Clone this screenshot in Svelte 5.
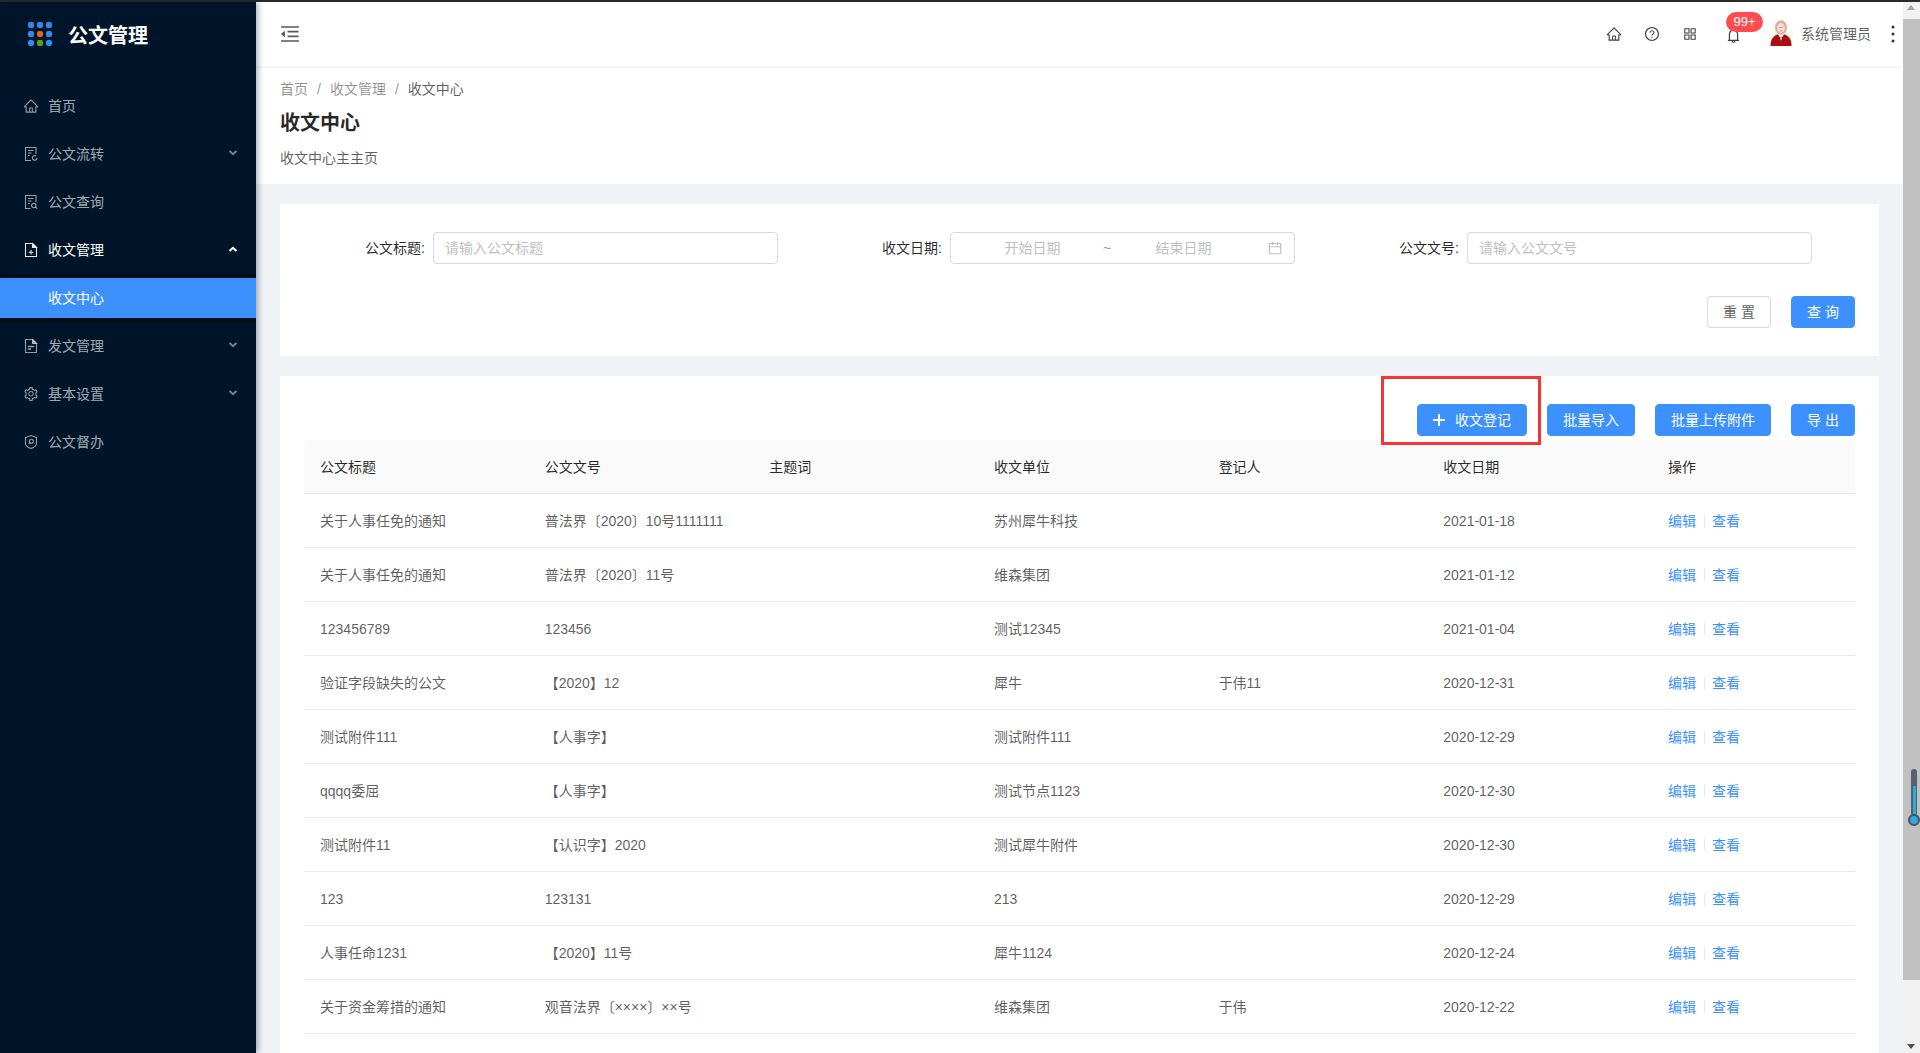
<script>
  const fontPaths = {
    home: "M946.5 505L560.1 118.8l-25.9-25.9a31.5 31.5 0 0 0-44.4 0L77.5 505a63.9 63.9 0 0 0-18.8 46c.4 35.2 29.7 63.3 64.9 63.3h42.5V940h691.8V614.3h43.4c17.1 0 33.2-6.7 45.3-18.8a63.6 63.6 0 0 0 18.7-45.3c0-17-6.7-33.1-18.8-45.2zM568 868H456V664h112v204zm217.9-325.7V868H632V640c0-22.1-17.9-40-40-40H432c-22.1 0-40 17.9-40 40v228H238.1V542.3h-96l370-369.7 23.1 23.1L882 542.3h-96.1z",
    help: "M512 64C264.6 64 64 264.6 64 512s200.6 448 448 448 448-200.6 448-448S759.4 64 512 64zm0 820c-205.4 0-372-166.6-372-372s166.6-372 372-372 372 166.6 372 372-166.6 372-372 372zM623.6 316.7C593.6 290.4 554 276 512 276s-81.6 14.5-111.6 40.7C369.2 344 352 380.7 352 420v7.6c0 4.4 3.6 8 8 8h48c4.4 0 8-3.6 8-8V420c0-44.1 43.1-80 96-80s96 35.9 96 80c0 31.1-22 59.6-56.1 72.7-21.2 8.1-39.2 22.3-52.1 40.9-13.1 19-19.9 41.8-19.9 64.9V620c0 4.4 3.6 8 8 8h48c4.4 0 8-3.6 8-8v-22.7a48.3 48.3 0 0 1 30.9-44.8c59-22.7 97.1-74.7 97.1-132.5.1-39.3-17.1-76-48.3-103.3zM472 732a40 40 0 1 0 80 0 40 40 0 1 0-80 0z",
    apps: "M464 144H160c-8.8 0-16 7.2-16 16v304c0 8.8 7.2 16 16 16h304c8.8 0 16-7.2 16-16V160c0-8.8-7.2-16-16-16zm-52 268H212V212h200v200zm452-268H560c-8.8 0-16 7.2-16 16v304c0 8.8 7.2 16 16 16h304c8.8 0 16-7.2 16-16V160c0-8.8-7.2-16-16-16zm-52 268H612V212h200v200zM464 544H160c-8.8 0-16 7.2-16 16v304c0 8.8 7.2 16 16 16h304c8.8 0 16-7.2 16-16V560c0-8.8-7.2-16-16-16zm-52 268H212V612h200v200zm452-268H560c-8.8 0-16 7.2-16 16v304c0 8.8 7.2 16 16 16h304c8.8 0 16-7.2 16-16V560c0-8.8-7.2-16-16-16zm-52 268H612V612h200v200z",
    bell: "M816 768h-24V428c0-141.1-104.3-257.7-240-277.1V112c0-22.1-17.9-40-40-40s-40 17.9-40 40v38.9c-135.7 19.4-240 136-240 277.1v340h-24c-17.7 0-32 14.3-32 32v32c0 4.4 3.6 8 8 8h216c0 61.8 50.2 112 112 112s112-50.2 112-112h216c4.4 0 8-3.6 8-8v-32c0-17.7-14.3-32-32-32zM512 888c-26.5 0-48-21.5-48-48h96c0 26.5-21.5 48-48 48zM304 768V428c0-55.6 21.6-107.8 60.9-147.1S456.4 220 512 220c55.6 0 107.8 21.6 147.1 60.9S720 372.4 720 428v340H304z",
    setting: "M924.8 625.7l-65.5-56c3.1-19 4.7-38.4 4.7-57.8s-1.6-38.8-4.7-57.8l65.5-56a32.03 32.03 0 0 0 9.3-35.2l-.9-2.6a443.74 443.74 0 0 0-79.7-137.9l-1.8-2.1a32.12 32.12 0 0 0-35.1-9.5l-81.3 28.9c-30-24.6-63.5-44-99.7-57.6l-15.7-85a32.05 32.05 0 0 0-25.8-25.7l-2.7-.5c-52.1-9.4-106.9-9.4-159 0l-2.7.5a32.05 32.05 0 0 0-25.8 25.7l-15.8 85.4a351.86 351.86 0 0 0-99 57.4l-81.9-29.1a32 32 0 0 0-35.1 9.5l-1.8 2.1a446.02 446.02 0 0 0-79.7 137.9l-.9 2.6c-4.5 12.5-.8 26.5 9.3 35.2l66.3 56.6c-3.1 18.8-4.6 38-4.6 57.1 0 19.2 1.5 38.4 4.6 57.1L99 625.5a32.03 32.03 0 0 0-9.3 35.2l.9 2.6c18.1 50.4 44.9 96.9 79.7 137.9l1.8 2.1a32.12 32.12 0 0 0 35.1 9.5l81.9-29.1c29.8 24.5 63.1 43.9 99 57.4l15.8 85.4a32.05 32.05 0 0 0 25.8 25.7l2.7.5a449.4 449.4 0 0 0 159 0l2.7-.5a32.05 32.05 0 0 0 25.8-25.7l15.7-85a350 350 0 0 0 99.7-57.6l81.3 28.9a32 32 0 0 0 35.1-9.5l1.8-2.1c34.8-41.1 61.6-87.5 79.7-137.9l.9-2.6c4.5-12.3.8-26.3-9.3-35zM788.3 465.9c2.5 15.1 3.8 30.6 3.8 46.1s-1.3 31-3.8 46.1l-6.6 40.1 74.7 63.9a370.03 370.03 0 0 1-42.6 73.6L721 702.8l-31.4 25.8c-23.9 19.6-50.5 35-79.3 45.8l-38.1 14.3-17.9 97a377.5 377.5 0 0 1-85 0l-17.9-97.2-37.8-14.5c-28.5-10.8-55-26.2-78.7-45.7l-31.4-25.9-93.4 33.2c-17-22.9-31.2-47.6-42.6-73.6l75.5-64.5-6.5-40c-2.4-14.9-3.7-30.3-3.7-45.5 0-15.3 1.2-30.6 3.7-45.5l6.5-40-75.5-64.5c11.3-26.1 25.6-50.7 42.6-73.6l93.4 33.2 31.4-25.9c23.7-19.5 50.2-34.9 78.7-45.7l37.9-14.3 17.9-97.2c28.1-3.2 56.8-3.2 85 0l17.9 97 38.1 14.3c28.7 10.8 55.4 26.2 79.3 45.8l31.4 25.8 92.8-32.9c17 22.9 31.2 47.6 42.6 73.6L781.8 426l6.5 39.9zM512 326c-97.2 0-176 78.8-176 176s78.8 176 176 176 176-78.8 176-176-78.8-176-176-176zm79.2 255.2A111.6 111.6 0 0 1 512 614c-29.9 0-58-11.7-79.2-32.8A111.6 111.6 0 0 1 400 502c0-29.9 11.7-58 32.8-79.2C454 401.6 482.1 390 512 390c29.9 0 58 11.6 79.2 32.8A111.6 111.6 0 0 1 624 502c0 29.9-11.7 58-32.8 79.2z",
    calendar: "M880 184H712v-64c0-4.4-3.6-8-8-8h-56c-4.4 0-8 3.6-8 8v64H384v-64c0-4.4-3.6-8-8-8h-56c-4.4 0-8 3.6-8 8v64H144c-17.7 0-32 14.3-32 32v664c0 17.7 14.3 32 32 32h736c17.7 0 32-14.3 32-32V216c0-17.7-14.3-32-32-32zm-40 656H184V460h656v380zM184 392V256h128v48c0 4.4 3.6 8 8 8h56c4.4 0 8-3.6 8-8v-48h256v48c0 4.4 3.6 8 8 8h56c4.4 0 8-3.6 8-8v-48h128v136H184z",
    outdent: "M408 442h480c4.4 0 8-3.6 8-8v-56c0-4.4-3.6-8-8-8H408c-4.4 0-8 3.6-8 8v56c0 4.4 3.6 8 8 8zm-8 204c0 4.4 3.6 8 8 8h480c4.4 0 8-3.6 8-8v-56c0-4.4-3.6-8-8-8H408c-4.4 0-8 3.6-8 8v56zm504-486H120c-4.4 0-8 3.6-8 8v56c0 4.4 3.6 8 8 8h784c4.4 0 8-3.6 8-8v-56c0-4.4-3.6-8-8-8zm0 632H120c-4.4 0-8 3.6-8 8v56c0 4.4 3.6 8 8 8h784c4.4 0 8-3.6 8-8v-56c0-4.4-3.6-8-8-8zM115.4 518.9L271.7 642c5.8 4.6 14.4.5 14.4-6.9V388.9c0-7.4-8.5-11.5-14.4-6.9L115.4 505.1a8.74 8.74 0 0 0 0 13.8z"
  };

  const menu = [
    { label: "首页", icon: "home" },
    { label: "公文流转", icon: "docRefresh", arrow: "down" },
    { label: "公文查询", icon: "docSearch" },
    { label: "收文管理", icon: "docPlus", arrow: "up", open: true },
    { label: "发文管理", icon: "docLines", arrow: "down" },
    { label: "基本设置", icon: "setting", arrow: "down" },
    { label: "公文督办", icon: "shield" }
  ];

  const columns = ["公文标题", "公文文号", "主题词", "收文单位", "登记人", "收文日期", "操作"];

  const rows = [
    ["关于人事任免的通知", "普法界〔2020〕10号1111111", "", "苏州犀牛科技", "", "2021-01-18"],
    ["关于人事任免的通知", "普法界〔2020〕11号", "", "维森集团", "", "2021-01-12"],
    ["123456789", "123456", "", "测试12345", "", "2021-01-04"],
    ["验证字段缺失的公文", "【2020】12", "", "犀牛", "于伟11", "2020-12-31"],
    ["测试附件111", "【人事字】", "", "测试附件111", "", "2020-12-29"],
    ["qqqq委屈", "【人事字】", "", "测试节点1123", "", "2020-12-30"],
    ["测试附件11", "【认识字】2020", "", "测试犀牛附件", "", "2020-12-30"],
    ["123", "123131", "", "213", "", "2020-12-29"],
    ["人事任命1231", "【2020】11号", "", "犀牛1124", "", "2020-12-24"],
    ["关于资金筹措的通知", "观音法界〔××××〕××号", "", "维森集团", "于伟", "2020-12-22"]
  ];

  const dots = ["#2d8cf0", "#2d8cf0", "#2d8cf0", "#2d8cf0", "#e8650c", "#2d8cf0", "#2d8cf0", "#4ea528", "#2d8cf0"];
</script>

{#snippet glyph(name, size)}
  <svg class="glyph" width={size} height={size} viewBox="64 64 896 896" fill="currentColor"><path d={fontPaths[name]} /></svg>
{/snippet}

{#snippet menuIcon(name)}
  {#if name === "home" || name === "setting"}
    {@render glyph(name, 14)}
  {:else}
    <svg class="glyph" width="14" height="14" viewBox="0 0 14 14" fill="none" stroke="currentColor" stroke-width="1.1">
      {#if name === "docRefresh"}
        <path d="M7 13.500H1.500V.5h10.500v6.500" />
        <path d="M4 3.500h5.500M4 6h3.500M4 8.500h1.500" />
        <path d="M13 11a2.300 2.300 0 1 1-1-2" />
      {:else if name === "docSearch"}
        <path d="M6.500 13.500h-5V.5h10.500v6.500" />
        <path d="M4 3.500h5.500M4 6h3.500M4 8.500h1.500" />
        <circle cx="9.800" cy="10.400" r="2.200" />
        <path d="M11.400 12l1.800 1.600" />
      {:else if name === "docPlus"}
        <path d="M8.500.5h-7v13h11V4.500z" />
        <path d="M8.500.5v4h4z" fill="currentColor" />
        <path d="M7 7v4.500M4.700 9.200h4.600" />
      {:else if name === "docLines"}
        <path d="M8.500.5h-7v13h11V4.500z" />
        <path d="M8.500.5v4h4z" fill="currentColor" />
        <path d="M3.800 7.500h6.500M3.800 10h3.200" stroke-width="1.500" />
      {:else if name === "shield"}
        <path d="M7 .6l5.500 2v5.600c0 2.400-2.500 4.200-5.500 5.200-3-1-5.500-2.800-5.500-5.200V2.600z" />
        <circle cx="7.400" cy="6.200" r="2" />
        <path d="M6 7.600L4.800 9.200" />
      {/if}
    </svg>
  {/if}
{/snippet}

<div class="window">
  <div class="topline"></div>
  <div class="page">
    <aside class="sider">
      <div class="logo">
        <div class="dots">
          {#each dots as color}
            <i style:background={color}></i>
          {/each}
        </div>
        <span class="logo-text">公文管理</span>
      </div>
      <nav>
        {#each menu as item}
          <div class="item" class:open={item.open}>
            <span class="ico">{@render menuIcon(item.icon)}</span>
            <span>{item.label}</span>
            {#if item.arrow}
              <svg class="arrow" width="10" height="6" viewBox="0 0 10 6" fill="none" stroke="currentColor" stroke-width="2">
                <path d={item.arrow === "up" ? "M1.500 5L5 1.800 8.500 5" : "M1.500 1L5 4.200 8.500 1"} />
              </svg>
            {/if}
          </div>
          {#if item.open}
            <div class="sub">
              <div class="sub-item">收文中心</div>
            </div>
          {/if}
        {/each}
      </nav>
    </aside>

    <main>
      <header class="topbar">
        <span class="collapse">{@render glyph("outdent", 20)}</span>
        <div class="actions">
          <span class="action">{@render glyph("home", 14)}</span>
          <span class="action">{@render glyph("help", 14)}</span>
          <span class="action">{@render glyph("apps", 14)}</span>
          <span class="action bell">
            {@render glyph("bell", 15)}
            <b class="badge">99+</b>
          </span>
          <svg class="avatar" width="24" height="26" viewBox="0 0 24 26">
            <circle cx="12" cy="13" r="12" fill="#fdf9f0" />
            <path d="M1.500 26c0-7 2.500-9.500 6.500-11.500h8c4 2 6.500 4.500 6.500 11.500z" fill="#a90f0f" />
            <path d="M9 14l3 6.500L15 14z" fill="#f7efe6" />
            <path d="M9.500 16.500l2.500 1.200 2.500-1.200v2.200l-2.500-1-2.500 1z" fill="#7d0b0b" />
            <ellipse cx="12" cy="7.500" rx="6" ry="7.200" fill="#dcaea2" />
            <ellipse cx="12" cy="8" rx="3.800" ry="5" fill="#f3dfd6" />
            <path d="M10 7.500h4M10.500 11h3" stroke="#c48d80" stroke-width="0.800" />
          </svg>
          <span class="username">系统管理员</span>
          <svg class="more" width="14" height="18" viewBox="0 0 14 18" fill="#333">
            <circle cx="7" cy="2" r="1.500" />
            <circle cx="7" cy="9" r="1.500" />
            <circle cx="7" cy="16" r="1.500" />
          </svg>
        </div>
      </header>

      <section class="page-head">
        <div class="crumbs">
          <span>首页</span><em>/</em><span>收文管理</span><em>/</em><span class="current">收文中心</span>
        </div>
        <h1>收文中心</h1>
        <p>收文中心主主页</p>
      </section>

      <section class="card search">
        <div class="fields">
          <div class="field">
            <label for="title">公文标题:</label>
            <input id="title" placeholder="请输入公文标题" />
          </div>
          <div class="field">
            <label for="date">收文日期:</label>
            <div class="range" id="date">
              <span>开始日期</span>
              <span class="tilde">~</span>
              <span>结束日期</span>
              <span class="cal">{@render glyph("calendar", 14)}</span>
            </div>
          </div>
          <div class="field">
            <label for="code">公文文号:</label>
            <input id="code" placeholder="请输入公文文号" />
          </div>
        </div>
        <div class="btns">
          <button class="plain">重 置</button>
          <button>查 询</button>
        </div>
      </section>

      <section class="card list">
        <div class="btns top">
          <div class="marked">
            <button class="add"><svg width="12" height="12" viewBox="0 0 12 12" fill="#fff"><path d="M5 0h2v5h5v2H7v5H5V7H0V5h5z" /></svg>收文登记</button>
            <span class="redbox"></span>
          </div>
          <button>批量导入</button>
          <button>批量上传附件</button>
          <button>导 出</button>
        </div>
        <table>
          <thead>
            <tr>
              {#each columns as col}
                <th>{col}</th>
              {/each}
            </tr>
          </thead>
          <tbody>
            {#each rows as row}
              <tr>
                {#each row as cell}
                  <td>{cell}</td>
                {/each}
                <td class="ops"><a href="#edit">编辑</a><i></i><a href="#view">查看</a></td>
              </tr>
            {/each}
          </tbody>
        </table>
      </section>
    </main>

    <div class="scrollbar">
      <span class="tri up"></span>
      <div class="thumb"></div>
      <span class="tri down"></span>
    </div>
    <div class="thermo"><span class="level"></span><span class="bulb"></span></div>
  </div>
</div>

<style>
  :global(body) {
    margin: 0;
    overflow: hidden;
    font-family: "Liberation Sans", "Noto Sans CJK SC", sans-serif;
    font-size: 14px;
    line-height: 22px;
    color: rgba(0, 0, 0, 0.65);
  }

  .window {
    height: 1053px;
    display: flex;
    flex-direction: column;
    overflow: hidden;
  }

  .topline {
    height: 2px;
    flex: none;
    background: #2b2b2b;
  }

  .page {
    flex: 1;
    min-height: 0;
    display: flex;
    position: relative;
  }

  .glyph {
    display: block;
  }

  /* sidebar */
  .sider {
    width: 256px;
    flex: none;
    background: #001529;
    box-shadow: 2px 0 6px rgba(0, 21, 41, 0.35);
    z-index: 2;
    color: rgba(255, 255, 255, 0.65);
  }

  .logo {
    height: 64px;
    padding-left: 28px;
    box-sizing: border-box;
    display: flex;
    align-items: center;
    gap: 16px;
    color: #fff;
    font-size: 20px;
    font-weight: 700;
  }

  .logo-text {
    padding-top: 4px;
  }

  .dots {
    width: 24px;
    display: grid;
    grid-template-columns: repeat(3, 6px);
    gap: 3px;
  }

  .dots i {
    height: 6px;
    border-radius: 2px;
  }

  nav {
    padding-top: 20px;
    display: flex;
    flex-direction: column;
    gap: 8px;
  }

  .item {
    height: 40px;
    padding: 0 24px;
    display: flex;
    align-items: center;
    gap: 10px;
    position: relative;
  }

  .item.open {
    color: #fff;
  }

  .ico {
    width: 14px;
    opacity: 0.9;
  }

  .arrow {
    position: absolute;
    right: 18px;
    top: 16px;
    opacity: 0.7;
  }

  .item.open .arrow {
    opacity: 1;
  }

  .sub {
    background: #000c17;
    padding: 4px 0;
    margin: -4px 0;
  }

  .sub-item {
    height: 40px;
    line-height: 40px;
    padding-left: 48px;
    background: #3d91ff;
    color: #fff;
  }

  /* main column */
  main {
    flex: 1;
    min-width: 0;
    background: #f0f2f5;
    overflow: hidden;
  }

  .topbar {
    height: 64px;
    background: #fff;
    box-shadow: 0 1px 4px rgba(0, 21, 41, 0.08);
    display: flex;
    align-items: center;
    justify-content: space-between;
    padding: 0 3px 0 24px;
    position: relative;
  }

  .collapse {
    color: rgba(0, 0, 0, 0.65);
  }

  .actions {
    display: flex;
    align-items: center;
    color: rgba(0, 0, 0, 0.75);
  }

  .action {
    width: 38px;
    display: flex;
    justify-content: center;
    position: relative;
  }

  .action.bell {
    width: 48px;
    padding-top: 2px;
  }

  .badge {
    position: absolute;
    left: 17px;
    top: -14px;
    width: 37px;
    height: 20px;
    line-height: 20px;
    border-radius: 10px;
    background: #ff4d4f;
    color: #fff;
    font-size: 13px;
    font-weight: 400;
    text-align: center;
  }

  .avatar {
    margin-left: 12px;
    margin-top: -2px;
  }

  .username {
    margin-left: 8px;
    color: rgba(0, 0, 0, 0.65);
  }

  .more {
    margin-left: 15px;
  }

  .page-head {
    background: #fff;
    height: 118px;
    box-sizing: border-box;
    padding: 12px 24px 0;
  }

  .crumbs {
    color: rgba(0, 0, 0, 0.45);
  }

  .crumbs em {
    font-style: normal;
    margin: 0 9px;
  }

  .crumbs .current {
    color: rgba(0, 0, 0, 0.65);
  }

  h1 {
    margin: 12px 0 0;
    font-size: 20px;
    line-height: 22px;
    font-weight: 700;
    color: rgba(0, 0, 0, 0.85);
  }

  .page-head p {
    margin: 13px 0 0;
  }

  .card {
    background: #fff;
    margin: 20px 24px 0;
    padding: 28px 24px;
  }

  .fields {
    display: grid;
    grid-template-columns: repeat(3, 1fr);
  }

  .field {
    display: flex;
    align-items: center;
    padding-right: 43px;
  }

  .field label {
    width: 129px;
    flex: none;
    padding-right: 8px;
    box-sizing: border-box;
    text-align: right;
    color: rgba(0, 0, 0, 0.85);
    white-space: nowrap;
  }

  input,
  .range {
    flex: 1;
    min-width: 0;
    height: 32px;
    box-sizing: border-box;
    border: 1px solid #d9d9d9;
    border-radius: 4px;
    padding: 0 11px;
    font: inherit;
    outline: none;
    background: #fff;
  }

  input::placeholder {
    color: #bfbfbf;
  }

  .range {
    display: grid;
    grid-template-columns: 141px 6px 149px 10px 14px;
    align-items: center;
    text-align: center;
    color: #bfbfbf;
  }

  .range .tilde {
    color: rgba(0, 0, 0, 0.45);
  }

  .cal {
    grid-column: 5;
  }

  .btns {
    display: flex;
    justify-content: flex-end;
    gap: 20px;
    margin-top: 32px;
  }

  .btns.top {
    margin-top: 0;
  }

  button {
    height: 32px;
    min-width: 64px;
    padding: 0 15px;
    box-sizing: border-box;
    border: 1px solid #3d91ff;
    border-radius: 4px;
    background: #3d91ff;
    color: #fff;
    font: inherit;
    cursor: pointer;
    white-space: pre;
  }

  button.plain {
    background: #fff;
    border-color: #d9d9d9;
    color: rgba(0, 0, 0, 0.65);
  }

  .marked {
    position: relative;
    display: flex;
  }

  button.add {
    width: 110px;
    display: flex;
    align-items: center;
    justify-content: center;
    gap: 10px;
  }

  .redbox {
    position: absolute;
    left: -36px;
    top: -28px;
    width: 160px;
    height: 69px;
    box-sizing: border-box;
    border: 3px solid #f33535;
    pointer-events: none;
    z-index: 1;
  }

  table {
    width: 100%;
    margin-top: 4px;
    border-collapse: separate;
    border-spacing: 0;
    table-layout: fixed;
  }

  th,
  td {
    height: 54px;
    box-sizing: border-box;
    padding: 0 16px;
    text-align: left;
    border-bottom: 1px solid #e8e8e8;
    white-space: nowrap;
    overflow: hidden;
  }

  th {
    background: #fafafa;
    font-weight: 400;
    color: rgba(0, 0, 0, 0.85);
  }

  th:first-child {
    border-top-left-radius: 4px;
  }

  th:nth-child(7),
  td:nth-child(7) {
    width: 203px;
  }

  .ops a {
    color: #3d91ff;
    text-decoration: none;
  }

  .ops i {
    display: inline-block;
    width: 1px;
    height: 12px;
    margin: 0 7.500px;
    vertical-align: -1px;
    background: #e8e8e8;
  }

  /* browser chrome on the right edge */
  .scrollbar {
    width: 17px;
    flex: none;
    background: #f1f1f1;
    position: relative;
  }

  .thumb {
    position: absolute;
    top: 17px;
    bottom: 73px;
    left: 0;
    right: 0;
    background: #c1c1c1;
  }

  .tri {
    position: absolute;
    left: 4px;
    border: 4px solid transparent;
  }

  .tri.up {
    top: 3px;
    border-top: 0;
    border-bottom: 5px solid #a3a3a3;
  }

  .tri.down {
    bottom: 4px;
    border-bottom: 0;
    border-top: 5px solid #505050;
  }

  .thermo {
    position: absolute;
    left: 1911px;
    top: 767px;
    width: 6px;
    height: 52px;
    border-radius: 3px 3px 0 0;
    background: #55626c;
    z-index: 3;
  }

  .level {
    position: absolute;
    left: 1.500px;
    top: 17px;
    bottom: 0;
    width: 3px;
    background: #29abe2;
  }

  .bulb {
    position: absolute;
    left: -3px;
    bottom: -5px;
    width: 8px;
    height: 8px;
    border-radius: 50%;
    border: 2px solid #46525c;
    background: #29abe2;
  }
</style>
